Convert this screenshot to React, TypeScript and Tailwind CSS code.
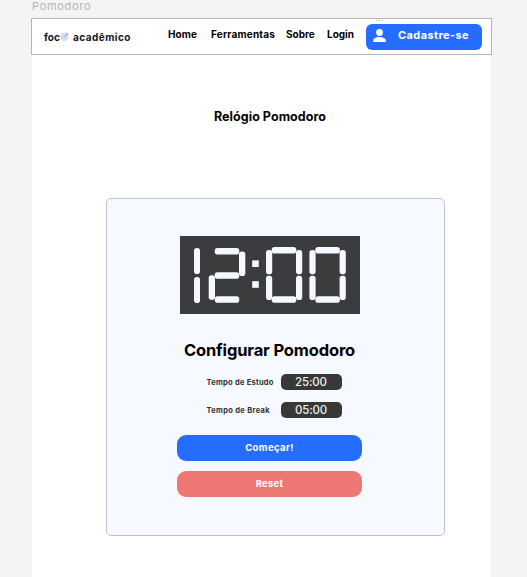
import React from "react";

const segments: [number, number, number, number][] = [
  [14, 12, 6, 26],
  [14, 41, 6, 26],
  [34.7, 12, 24.6, 6.5],
  [59, 15.5, 6.3, 24.5],
  [34.7, 36.3, 24.6, 6.4],
  [28.7, 39.3, 6.3, 24.4],
  [34.7, 60.2, 24.6, 6.5],
  [86, 14, 6.2, 24.2],
  [86, 39.8, 6.2, 24.2],
  [91.7, 11, 24.6, 6.6],
  [116, 14, 6.2, 24.2],
  [116, 39.8, 6.2, 24.2],
  [91.7, 60.2, 24.6, 6.5],
  [129.4, 14, 6.2, 24.2],
  [129.4, 39.8, 6.2, 24.2],
  [135.3, 11, 24.6, 6.6],
  [159.6, 14, 6.2, 24.2],
  [159.6, 39.8, 6.2, 24.2],
  [135.3, 60.2, 24.6, 6.5],
];

function Clock() {
  return (
    <svg className="mt-[37px] block h-[78px] w-[180px]" viewBox="0 0 180 78" role="img" aria-label="12:00">
      <rect width="180" height="78" fill="#3b3c3e" />
      {segments.map(([x, y, w, h], i) => (
        <rect key={i} x={x} y={y} width={w} height={h} rx="2.8" fill="#f6f8ff" />
      ))}
      <rect x="72.2" y="24.4" width="6.6" height="6.6" fill="#f6f8ff" />
      <rect x="72.2" y="45.2" width="6.6" height="6.6" fill="#f6f8ff" />
    </svg>
  );
}

function Target() {
  return (
    <svg className="h-[9px] w-[9px] shrink-0" viewBox="0 0 9 9" fill="none" stroke="#b4c1ee" strokeWidth="0.8">
      <circle cx="4.1" cy="4.9" r="3.5" fill="#eef1fc" />
      <circle cx="4.1" cy="4.9" r="1.7" />
      <path d="M4.1 4.9 7.3 1.7M6.7 .7v1.7h1.7" stroke="#7e9aea" />
    </svg>
  );
}

function TimeRow({ label, value, labelClass }: { label: string; value: string; labelClass: string }) {
  return (
    <div className="flex h-[15.5px] w-[135px] items-center justify-between">
      <span className={`whitespace-nowrap pt-px text-[7.5px] leading-none font-bold text-[#333] ${labelClass}`}>{label}</span>
      <span className="flex h-[15.5px] w-[61px] items-center justify-center rounded-[5px] bg-[#383838] pt-[1.5px] text-[11.5px] leading-none font-medium tracking-[-0.15px] text-[#eee]">
        {value}
      </span>
    </div>
  );
}

export default function App() {
  return (
    <div className="h-[577px] w-[527px] overflow-hidden bg-[#f4f4f4] font-['Inter','Liberation_Sans',sans-serif] text-black">
      <div className="h-[18px] pl-8 text-[11px] leading-[13px] tracking-[0.7px] text-[#b5b5b5]">Pomodoro</div>
      <div className="ml-[31px] w-[461px]">
        <header className="relative flex h-[37px] border border-[#b5b5b5] bg-white">
          <span className="absolute top-px left-[344px] flex gap-[2px]">
            <i className="h-px w-px bg-[#bbb]" />
            <i className="h-px w-px bg-[#bbb]" />
            <i className="h-px w-px bg-[#bbb]" />
          </span>
          <div className="flex h-[35px] w-[136px] items-center pl-3 text-[10px] leading-none font-bold text-[#15151f]">
            <span className="tracking-[0.1px]">foc</span>
            <Target />
            <span className="ml-[4px] tracking-[0.45px]">acadêmico</span>
          </div>
          <nav className="flex pt-[9px] text-[10px] leading-[13px] font-bold">
            <a className="w-[43px] tracking-[0.1px]">Home</a>
            <a className="w-[75px] tracking-[0.2px]">Ferramentas</a>
            <a className="w-[41px]">Sobre</a>
            <a className="w-[39px]">Login</a>
          </nav>
          <button className="mt-[4.5px] flex h-[26px] w-[116px] items-center rounded-[6px] bg-[#246dff] pb-[2px] pl-[7px] text-[11px] leading-none font-bold text-white">
            <svg className="h-[13px] w-[13px]" viewBox="0 0 13 13" fill="currentColor">
              <circle cx="6.5" cy="3.5" r="3.4" />
              <path d="M.2 13v-1.4C.2 9.4 3.4 8 6.5 8s6.3 1.4 6.3 3.6V13z" />
            </svg>
            <span className="ml-[12px] whitespace-nowrap tracking-[0.4px]">Cadastre-se</span>
          </button>
        </header>
        <main className="mx-px flex h-[522px] flex-col items-center bg-white">
          <h1 className="mt-[54px] ml-[17px] h-[16px] whitespace-nowrap text-[12.5px] leading-[16px] font-bold tracking-[0.05px]">
            Relógio Pomodoro
          </h1>
          <section className="mt-[73px] ml-[28px] flex h-[338px] w-[339px] flex-col items-center rounded-[5px] border border-[#c0c2c8] bg-[#f6f9ff] pr-[12px]">
            <Clock />
            <h2 className="mt-[25px] h-[22px] whitespace-nowrap text-[16.5px] leading-[22px] font-bold tracking-[-0.15px]">
              Configurar Pomodoro
            </h2>
            <div className="mt-[13px] ml-[9px] flex flex-col gap-[12.5px]">
              <TimeRow label="Tempo de Estudo" value="25:00" labelClass="tracking-[0.26px]" />
              <TimeRow label="Tempo de Break" value="05:00" labelClass="tracking-[0.32px]" />
            </div>
            <button className="mt-[17px] h-[26.5px] w-[185px] rounded-[9px] bg-[#246dff] text-[9.5px] font-bold tracking-[0.4px] text-white">
              Começar!
            </button>
            <button className="mt-[9.5px] h-[26.5px] w-[185px] rounded-[9px] bg-[#ed7772] text-[9.5px] font-bold tracking-[0.25px] text-white">
              Reset
            </button>
          </section>
        </main>
      </div>
    </div>
  );
}
